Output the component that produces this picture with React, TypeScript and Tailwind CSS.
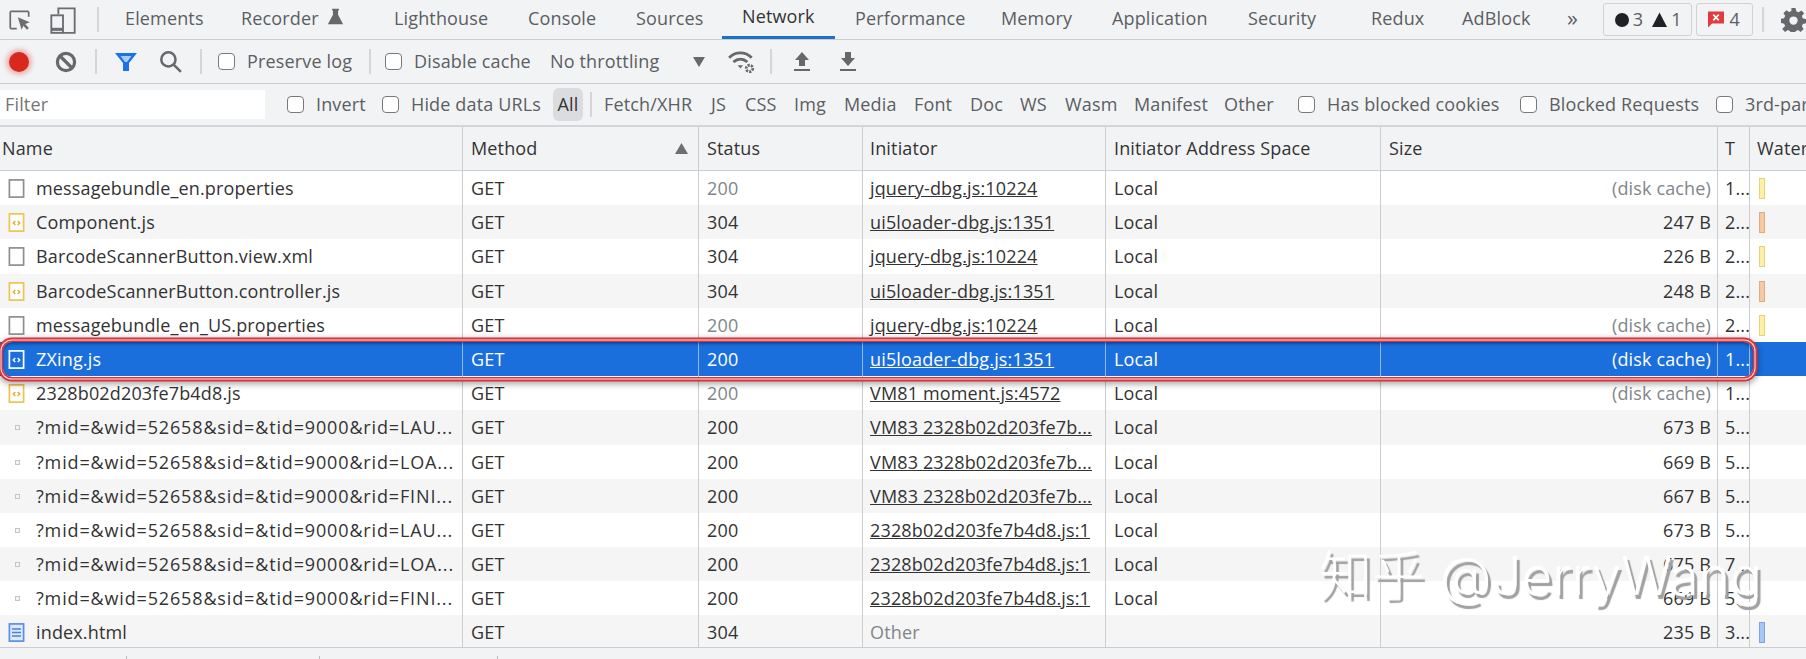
import type { ReactNode } from "react"

type Row = {
  name: string
  icon: "doc" | "js" | "dot" | "html"
  status: string
  initiator: string
  size: string
  time: string
  bar?: string
  cached?: boolean
  selected?: boolean
}

const mid = "?mid=&wid=52658&sid=&tid=9000&rid="

const rows: Row[] = [
  { name: "messagebundle_en.properties", icon: "doc", status: "200", initiator: "jquery-dbg.js:10224", size: "(disk cache)", time: "1...", bar: "y", cached: true },
  { name: "Component.js", icon: "js", status: "304", initiator: "ui5loader-dbg.js:1351", size: "247 B", time: "2...", bar: "o" },
  { name: "BarcodeScannerButton.view.xml", icon: "doc", status: "304", initiator: "jquery-dbg.js:10224", size: "226 B", time: "2...", bar: "y" },
  { name: "BarcodeScannerButton.controller.js", icon: "js", status: "304", initiator: "ui5loader-dbg.js:1351", size: "248 B", time: "2...", bar: "o" },
  { name: "messagebundle_en_US.properties", icon: "doc", status: "200", initiator: "jquery-dbg.js:10224", size: "(disk cache)", time: "2...", bar: "y", cached: true },
  { name: "ZXing.js", icon: "js", status: "200", initiator: "ui5loader-dbg.js:1351", size: "(disk cache)", time: "1...", selected: true },
  { name: "2328b02d203fe7b4d8.js", icon: "js", status: "200", initiator: "VM81 moment.js:4572", size: "(disk cache)", time: "1...", cached: true },
  { name: mid + "LAU...", icon: "dot", status: "200", initiator: "VM83 2328b02d203fe7b...", size: "673 B", time: "5..." },
  { name: mid + "LOA...", icon: "dot", status: "200", initiator: "VM83 2328b02d203fe7b...", size: "669 B", time: "5..." },
  { name: mid + "FINI...", icon: "dot", status: "200", initiator: "VM83 2328b02d203fe7b...", size: "667 B", time: "5..." },
  { name: mid + "LAU...", icon: "dot", status: "200", initiator: "2328b02d203fe7b4d8.js:1", size: "673 B", time: "5..." },
  { name: mid + "LOA...", icon: "dot", status: "200", initiator: "2328b02d203fe7b4d8.js:1", size: "675 B", time: "7..." },
  { name: mid + "FINI...", icon: "dot", status: "200", initiator: "2328b02d203fe7b4d8.js:1", size: "669 B", time: "5..." },
  { name: "index.html", icon: "html", status: "304", initiator: "Other", size: "235 B", time: "3...", bar: "b" },
]

const tabs = [
  { label: "Elements", w: "w-[116px]" },
  { label: "Recorder", w: "w-[153px]", flask: true },
  { label: "Lighthouse", w: "w-[134px]" },
  { label: "Console", w: "w-[108px]" },
  { label: "Sources", w: "w-[106px]" },
  { label: "Network", w: "w-[113px]", active: true },
  { label: "Performance", w: "w-[146px]" },
  { label: "Memory", w: "w-[111px]" },
  { label: "Application", w: "w-[136px]" },
  { label: "Security", w: "w-[123px]" },
  { label: "Redux", w: "w-[91px]" },
  { label: "AdBlock", w: "w-[103px]" },
]

const types = [
  { label: "Fetch/XHR", w: "w-[107px]" },
  { label: "JS", w: "w-[34px]" },
  { label: "CSS", w: "w-[49px]" },
  { label: "Img", w: "w-[50px]" },
  { label: "Media", w: "w-[70px]" },
  { label: "Font", w: "w-[56px]" },
  { label: "Doc", w: "w-[50px]" },
  { label: "WS", w: "w-[45px]" },
  { label: "Wasm", w: "w-[69px]" },
  { label: "Manifest", w: "w-[90px]" },
  { label: "Other", w: "w-[74px]" },
]

const grid = "grid grid-cols-[463px_236px_164px_243px_275px_337px_32px_1fr]"

const Divider = ({ className }: { className: string }) => (
  <div className={"h-[25px] w-[2px] shrink-0 bg-[#d3d5d8] " + className} />
)

const Check = ({ className, children }: { className?: string; children: ReactNode }) => (
  <label className={"flex shrink-0 items-center gap-[12px] " + (className ?? "")}>
    <span className="size-[17px] rounded-[4px] border border-[#77797c] bg-white" />
    <span>{children}</span>
  </label>
)

const FileIcon = ({ kind, selected }: { kind: Row["icon"]; selected?: boolean }) => {
  if (kind === "dot") {
    return <span className="ml-[15px] mr-[16px] size-[5px] shrink-0 border border-[#c3c5c8] bg-[#f5f5f5]" />
  }
  const stroke = selected ? "#ffffff" : kind === "js" ? "#eec44f" : kind === "html" ? "#5a8fe6" : "#8d8f92"
  return (
    <svg viewBox="0 0 16 19" className="ml-[8px] mr-[11px] h-[19px] w-[17px] shrink-0">
      <rect x="0.9" y="0.9" width="14.2" height="17.2" fill={selected ? "none" : kind === "html" ? "#dce9fb" : "#fff"} stroke={stroke} strokeWidth="1.700" />
      {(kind === "js" || selected) && (
        <path d="M6.800 8 4.800 10l2 2M9.200 8l2 2-2 2" fill="none" stroke={selected ? "#fff" : "#e0a92e"} strokeWidth="1.400" />
      )}
      {kind === "html" && <path d="M3.500 6h9M3.500 9.500h9M3.500 13h9" stroke="#4a7fdb" strokeWidth="1.400" />}
    </svg>
  )
}

const Bar = ({ kind }: { kind?: string }) => {
  if (kind === "y") return <div className="ml-[9px] h-[21px] w-[6px] border border-[#e6d27a] bg-[#fdf0a6]" />
  if (kind === "o") return <div className="ml-[9px] h-[21px] w-[6px] border border-[#e2ab80] bg-[#f6c8a4]" />
  if (kind === "b") return <div className="ml-[9px] h-[21px] w-[6px] border border-[#7aa5e6] bg-[#a8c7f2]" />
  return null
}

export default function App() {
  return (
    <div className="relative h-[659px] w-[1806px] overflow-hidden bg-[#f2f3f5] font-['Open_Sans',sans-serif] text-[18px] tracking-[0.15px] text-[#5b5e62]">
      {/* tabs */}
      <div className="flex h-[40px] items-center border-b border-[#cbcdd0]">
        <svg viewBox="0 0 24 24" className="ml-[7px] size-[26px] shrink-0" fill="none" stroke="#6b6d70" strokeWidth="1.600">
          <path d="M9 20H4a1 1 0 0 1-1-1V5a1 1 0 0 1 1-1h15a1 1 0 0 1 1 1v4" />
          <path d="M10 9.500 21 14l-4.200 1.700 3.400 3.600-1.700 1.700-3.400-3.600L13.500 21z" fill="#6b6d70" stroke="none" />
        </svg>
        <svg viewBox="0 0 24 24" className="ml-[16px] size-[28px] shrink-0" fill="none" stroke="#6b6d70" strokeWidth="1.600">
          <path d="M8 7V2h14v21H12" />
          <rect x="2" y="8" width="10" height="15" />
          <path d="M2 20h10" strokeWidth="2.600" />
        </svg>
        <Divider className="ml-[20px] mr-[6px]" />
        {tabs.map((t) => (
          <div
            key={t.label}
            className={"flex h-[39px] shrink-0 items-center gap-[8px] pb-[3px] pl-[20px] " + t.w + (t.active ? " border-b-[3px] border-[#1a73c8] pb-0 text-[#333]" : "")}
          >
            {t.label}
            {t.flask && (
              <svg viewBox="0 0 20 20" className="size-[17px] -translate-y-[2px]" fill="#66686b">
                <path d="M6 1h8v2h-1v5l6 11H1L7 8V3H6z" />
              </svg>
            )}
          </div>
        ))}
        <div className="ml-[22px] w-[37px] pb-[4px] text-[22px]">»</div>
        <div className="flex h-[33px] w-[92px] items-center gap-[3px] rounded-[3px] border border-[#cfd1d4] pl-[11px]">
          <span className="size-[14px] rounded-full bg-[#202124]" />
          <span className="mr-[6px] ml-[1px]">3</span>
          <svg viewBox="0 0 14 14" className="size-[15px]" fill="#202124">
            <path d="M7 0.500 14 14H0z" />
          </svg>
          <span className="ml-[1px]">1</span>
        </div>
        <div className="ml-[4px] flex h-[33px] w-[58px] items-center gap-[5px] rounded-[3px] border border-[#cfd1d4] pl-[11px]">
          <svg viewBox="0 0 16 18" className="h-[19px] w-[16px] shrink-0">
            <path d="M0 1h16v12H4l-4 4z" fill="#e23a3f" />
            <path d="M5.200 4.200 10.800 9.800M10.800 4.200 5.200 9.800" stroke="#fff" strokeWidth="1.700" />
          </svg>
          <span>4</span>
        </div>
        <Divider className="ml-[9px]" />
        <svg viewBox="0 0 24 24" className="ml-[17px] size-[25px] shrink-0" fill="#66686b">
          <path d="M10 1h4l.6 3 2.300 1 2.600-1.700 2.800 2.800L20 8.700l1 2.300 3 .6v4l-3 .6-1 2.300 1.700 2.600-2.800 2.800-2.600-1.700-2.300 1-.6 3h-4l-.6-3-2.300-1-2.600 1.700-2.800-2.800L4 18.300l-1-2.300-3-.6v-4l3-.6 1-2.300L2.300 5.900l2.800-2.800L7.700 4.800l2.300-1zM12 9a4 4 0 1 0 0 8 4 4 0 0 0 0-8z" fillRule="evenodd" />
        </svg>
      </div>

      {/* network toolbar */}
      <div className="flex h-[44px] items-center border-b border-[#cbcdd0]">
        <span className="ml-[9px] size-[20px] shrink-0 rounded-full bg-[#d9281e] shadow-[0_0_4px_3px_rgba(230,90,80,0.4)]" />
        <svg viewBox="0 0 22 22" className="ml-[26px] size-[22px] shrink-0" fill="none" stroke="#66686b" strokeWidth="3.200">
          <circle cx="11" cy="11" r="8.600" />
          <path d="M5 5l12 12" />
        </svg>
        <Divider className="ml-[18px]" />
        <svg viewBox="0 0 24 22" className="ml-[17px] h-[22px] w-[24px] shrink-0">
          <path d="M1 2h22l-8 10v8H9v-8z" fill="#1a73e8" />
          <path d="M6.500 5h11l-4.500 6h-2z" fill="#a9cdf7" />
        </svg>
        <svg viewBox="0 0 22 22" className="ml-[21px] size-[23px] shrink-0" fill="none" stroke="#66686b" strokeWidth="2.400">
          <circle cx="9" cy="9" r="6.800" />
          <path d="M14 14l7 7" />
        </svg>
        <Divider className="ml-[18px]" />
        <Check className="ml-[16px] w-[151px]">Preserve log</Check>
        <Divider className="" />
        <Check className="ml-[14px] w-[165px]">Disable cache</Check>
        <span className="w-[143px] shrink-0">No throttling</span>
        <svg viewBox="0 0 12 10" className="h-[10px] w-[12px] shrink-0" fill="#66686b">
          <path d="M0 0h12L6 10z" />
        </svg>
        <svg viewBox="0 0 26 22" className="ml-[23px] h-[24px] w-[28px] shrink-0" fill="none" stroke="#66686b" strokeWidth="2.600">
          <path d="M1 7c6-6 15-6 21 0M5 11c4-3.500 9-3.500 13 0" />
          <path d="M9 14h5l-2.500 3z" fill="#66686b" stroke="none" />
          <circle cx="20" cy="17" r="3" strokeWidth="2.600" strokeDasharray="2 1" />
        </svg>
        <Divider className="ml-[14px]" />
        <svg viewBox="0 0 18 20" className="ml-[21px] h-[20px] w-[18px] shrink-0" fill="#66686b">
          <path d="M9 0l7 8h-4v6H6V8H2zM1 17h16v2H1z" />
        </svg>
        <svg viewBox="0 0 18 20" className="ml-[28px] h-[20px] w-[18px] shrink-0" fill="#66686b">
          <path d="M6 0h6v6h4l-7 8-7-8h4zM1 17h16v2H1z" />
        </svg>
      </div>

      {/* filter bar */}
      <div className="flex h-[43px] items-center overflow-hidden border-b-2 border-[#d3d5d8] leading-[31px]">
        <div className="flex h-[29px] w-[265px] shrink-0 items-center bg-white pl-[5px] text-[#757575]">Filter</div>
        <Check className="ml-[22px] w-[95px]">Invert</Check>
        <Check className="w-[171px]">Hide data URLs</Check>
        <div className="flex h-[33px] w-[30px] shrink-0 items-center justify-center rounded-[6px] bg-[#dadce0] text-[#333]">All</div>
        <Divider className="ml-[7px] mr-[12px]" />
        {types.map((t) => (
          <span key={t.label} className={"shrink-0 " + t.w}>
            {t.label}
          </span>
        ))}
        <Check className="w-[222px]">Has blocked cookies</Check>
        <Check className="w-[196px]">Blocked Requests</Check>
        <Check>3rd-party requests</Check>
      </div>

      {/* header */}
      <div className={grid + " h-[44px] border-b border-[#cbcdd0] text-[#333]"}>
        <div className="flex items-center border-r border-[#cbcdd0] pl-[2px]">Name</div>
        <div className="flex items-center justify-between border-r border-[#cbcdd0] pl-[8px] pr-[10px]">
          Method
          <svg viewBox="0 0 12 10" className="h-[11px] w-[13px]" fill="#6d6f72">
            <path d="M6 0l6 10H0z" />
          </svg>
        </div>
        <div className="flex items-center border-r border-[#cbcdd0] pl-[8px]">Status</div>
        <div className="flex items-center border-r border-[#cbcdd0] pl-[7px]">Initiator</div>
        <div className="flex items-center border-r border-[#cbcdd0] pl-[8px]">Initiator Address Space</div>
        <div className="flex items-center border-r border-[#cbcdd0] pl-[8px]">Size</div>
        <div className="flex items-center border-r border-[#cbcdd0] pl-[7px]">T</div>
        <div className="flex items-center overflow-hidden whitespace-nowrap pl-[7px]">Waterfall</div>
      </div>

      {/* rows, the last one is cut by the status bar */}
      <div className="h-[476px] overflow-hidden">
        {rows.map((r, i) => {
          const base = r.selected ? "bg-[#1a6fdc] text-white" : i % 2 === 1 ? "bg-[#f5f5f5] text-[#333]" : "bg-white text-[#333]"
          const line = r.selected ? "border-[#8fb8ef]" : "border-[#cbcdd0]"
          const muted = r.cached ? "text-[#80868b]" : ""
          const other = r.initiator === "Other"
          return (
            <div key={i} className={grid + " h-[34.2px] leading-[35px] " + base}>
              <div className={"flex items-center overflow-hidden whitespace-nowrap border-r " + line}>
                <FileIcon kind={r.icon} selected={r.selected} />
                <span className={r.icon === "dot" ? "tracking-[0.85px]" : ""}>{r.name}</span>
              </div>
              <div className={"border-r pl-[8px] " + line}>GET</div>
              <div className={"border-r pl-[8px] " + line + " " + muted}>{r.status}</div>
              <div className={"overflow-hidden whitespace-nowrap border-r pl-[7px] " + line + (other ? " text-[#80868b]" : " underline")}>{r.initiator}</div>
              <div className={"border-r pl-[8px] " + line}>{other ? "" : "Local"}</div>
              <div className={"border-r pr-[6px] text-right " + line + " " + muted}>{r.size}</div>
              <div className={"overflow-hidden whitespace-nowrap border-r pl-[7px] " + line}>{r.time}</div>
              <div className="flex items-center">
                <Bar kind={r.bar} />
              </div>
            </div>
          )
        })}
      </div>

      {/* status bar */}
      <div className="flex h-[12px] items-end border-t border-[#cbcdd0]">
        <div className="h-[3px] w-[127px] border-r border-[#b9bbbe]" />
        <div className="h-[3px] w-[193px] border-r border-[#b9bbbe]" />
        <div className="h-[3px] w-[178px] border-r border-[#b9bbbe]" />
      </div>

      {/* red highlight around the selected request */}
      <div className="absolute left-[3px] top-[342px] h-[35px] w-[1750px] rounded-[9px] shadow-[inset_0_2px_3px_rgba(0,20,80,0.45),0_0_0_1.5px_#d8343c,0_0_0_2.5px_#fbe3e3,0_0_0_4.5px_#d8343c,0_2px_6px_5px_rgba(0,0,0,0.35)]" />

      {/* watermark */}
      <div className="absolute left-[1319px] top-[537px] whitespace-nowrap font-['Inter','Noto_Sans_CJK_SC',sans-serif] text-[53px] font-light tracking-normal text-white [text-shadow:3px_4px_1px_#a0a0a0]">
        知乎 @JerryWang
      </div>
    </div>
  )
}
